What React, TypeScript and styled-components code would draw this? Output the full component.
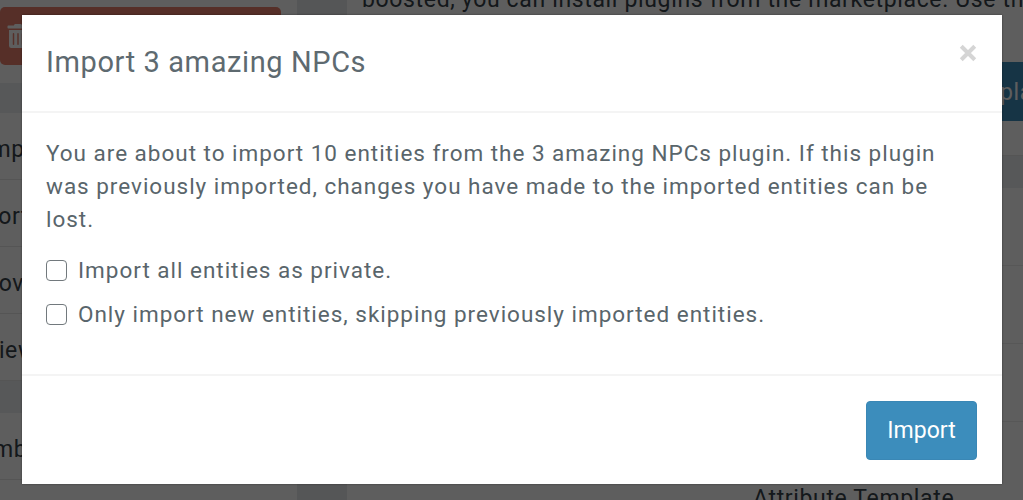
import styled, { createGlobalStyle } from "styled-components";
import { FaTrashAlt } from "react-icons/fa";

const GlobalStyle = createGlobalStyle`
  html, body {
    margin: 0;
    height: 100%;
    overflow: hidden;
    background: #fff;
    font-family: Roboto, "Liberation Sans", sans-serif;
  }
  * { box-sizing: border-box; }
`;

const sideRows = [
  { label: "Compare", shift: 39 },
  { label: "Import", shift: 43 },
  { label: "Move", shift: 22 },
  { label: "Preview", shift: 49 },
];

export default function App() {
  return (
    <Page>
      <GlobalStyle />
      <Backdrop>
        <SideColumn>
          <DeleteButton>
            <FaTrashAlt size={24} />
          </DeleteButton>
          <SideHeading $height={30} />
          {sideRows.map((row) => (
            <SideRow key={row.label} $shift={row.shift}>
              {row.label}
            </SideRow>
          ))}
          <SideHeading $height={32} />
          <SideRow $shift={48}>Thumbnail</SideRow>
        </SideColumn>
        <Rail />
        <MainColumn>
          <MainText>
            boosted, you can install plugins from the marketplace. Use the
            plugin
          </MainText>
          <TemplateButton>Template</TemplateButton>
          <TableHeading />
          <TableRow />
          <TableRow />
          <TableRow />
          <Spacer />
          <KeepLink>Don't delete this</KeepLink>
          <TemplateTitle>Attribute Template</TemplateTitle>
        </MainColumn>
      </Backdrop>
      <Overlay />
      <Modal>
        <ModalHeader>
          <ModalTitle>Import 3 amazing NPCs</ModalTitle>
          <CloseIcon viewBox="0 0 16 16" aria-hidden="true">
            <path d="M2 2 14 14M14 2 2 14" />
          </CloseIcon>
        </ModalHeader>
        <ModalBody>
          <Intro>
            You are about to import 10 entities from the 3 amazing NPCs plugin.
            If this plugin was previously imported, changes you have made to the
            imported entities can be lost.
          </Intro>
          <CheckRow>
            <CheckBox type="checkbox" />
            Import all entities as private.
          </CheckRow>
          <CheckRow>
            <CheckBox type="checkbox" />
            Only import new entities, skipping previously imported entities.
          </CheckRow>
        </ModalBody>
        <ModalFooter>
          <ImportButton>Import</ImportButton>
        </ModalFooter>
      </Modal>
    </Page>
  );
}

const Page = styled.div`
  position: relative;
  width: 1023px;
  height: 500px;
  overflow: hidden;
`;

const Backdrop = styled.div`
  display: flex;
  height: 500px;
  color: #37424a;
  font-size: 23px;
  letter-spacing: 0.65px;
`;

const SideColumn = styled.div`
  width: 297px;
  flex: none;
  padding-top: 7px;
  display: flex;
  flex-direction: column;
  overflow: hidden;
`;

const DeleteButton = styled.div`
  width: 281px;
  height: 58px;
  margin-bottom: 18px;
  padding: 17px 0 0 6px;
  background: #e8806c;
  border-radius: 5px;
  color: #fff;
`;

const SideHeading = styled.div<{ $height: number }>`
  height: ${(p) => p.$height}px;
  background: #eceff1;
`;

const SideRow = styled.div<{ $shift: number }>`
  height: 67px;
  flex: none;
  padding-top: 6px;
  display: flex;
  align-items: center;
  white-space: nowrap;
  overflow: hidden;
  text-indent: ${(p) => -p.$shift}px;
  border-bottom: 1px solid #e6e6e6;
`;

const Rail = styled.div`
  width: 50px;
  flex: none;
  background: #e6eaed;
`;

const MainColumn = styled.div`
  flex: 1;
  padding: 0 0 0 15px;
  display: flex;
  flex-direction: column;
  min-width: 0;
  overflow: hidden;
`;

const MainText = styled.div`
  height: 74px;
  margin-top: -12px;
  white-space: nowrap;
  line-height: 24px;
`;

const TemplateButton = styled.div`
  align-self: flex-end;
  width: 200px;
  height: 59px;
  flex: none;
  padding: 17px 0 0 130px;
  background: #3c8dbc;
  color: #fff;
  white-space: nowrap;
  overflow: hidden;
`;

const TableHeading = styled.div`
  height: 33px;
  flex: none;
  margin: 34px -15px 0 0;
  background: #eceff1;
  border-top: 1px solid #e6e6e6;
`;

const TableRow = styled.div`
  height: 78px;
  flex: none;
  border-bottom: 1px solid #ececec;
`;

const Spacer = styled.div`
  flex: 1;
`;

const KeepLink = styled.div`
  color: #3c8dbc;
  line-height: 24px;
  margin: 0 0 6px -3px;
  white-space: nowrap;
`;

const TemplateTitle = styled.div`
  margin: -6px 0 -11px 391px;
  line-height: 24px;
  white-space: nowrap;
`;

const Overlay = styled.div`
  position: absolute;
  inset: 0;
  background: rgba(0, 0, 0, 0.63);
`;

const Modal = styled.div`
  position: absolute;
  top: 15px;
  left: 22px;
  width: 980px;
  height: 469px;
  background: #fff;
  color: #59656b;
  display: flex;
  flex-direction: column;
  box-shadow: 0 0 2px rgba(0, 0, 0, 0.4);
`;

const ModalHeader = styled.div`
  height: 98px;
  flex: none;
  padding: 0 25px 0 24px;
  display: flex;
  align-items: center;
  justify-content: space-between;
  border-bottom: 2px solid #f4f4f4;
`;

const ModalTitle = styled.h4`
  margin: -3px 0 0;
  font-size: 29px;
  font-weight: 400;
  letter-spacing: 0.6px;
  color: #5e6a70;
`;

const CloseIcon = styled.svg`
  width: 18px;
  height: 18px;
  margin-top: -21px;
  fill: none;
  stroke: #d5d5d5;
  stroke-width: 3.6;
`;

const ModalBody = styled.div`
  flex: 1;
  padding: 24px 24px 0;
`;

const Intro = styled.p`
  margin: 0 0 12px;
  font-size: 22.5px;
  line-height: 33px;
  letter-spacing: 0.98px;
`;

const CheckRow = styled.label`
  display: flex;
  align-items: center;
  height: 44px;
  font-size: 22.5px;
  letter-spacing: 0.98px;
  white-space: nowrap;
`;

const CheckBox = styled.input`
  appearance: none;
  width: 21px;
  height: 21px;
  margin: 0 11px 0 0;
  flex: none;
  background: #fff;
  border: 1.5px solid #72797d;
  border-radius: 4px;
`;

const ModalFooter = styled.div`
  height: 110px;
  flex: none;
  padding: 25px 25px 0 0;
  display: flex;
  justify-content: flex-end;
  align-items: flex-start;
  border-top: 2px solid #f4f4f4;
`;

const ImportButton = styled.button`
  width: 111px;
  height: 59px;
  border: 1px solid #3a87b5;
  border-radius: 4px;
  background: #3c8dbc;
  color: #fff;
  font-family: inherit;
  font-size: 23px;
`;
